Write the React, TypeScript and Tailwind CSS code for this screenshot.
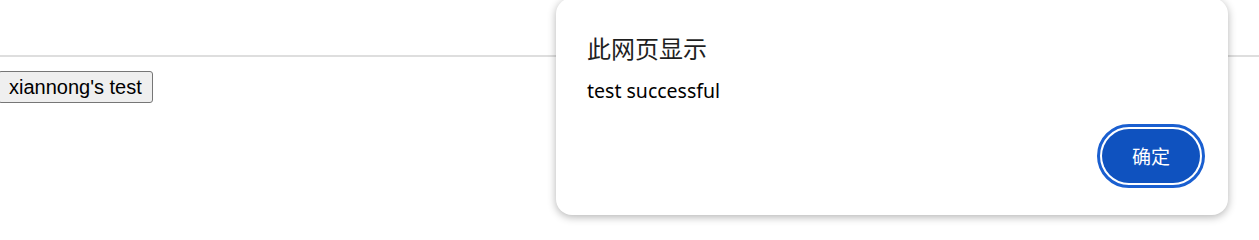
export default function App() {
  return (
    <div className="relative h-[234px] w-[1259px] overflow-hidden bg-white font-['Liberation_Sans',Arial,sans-serif]">
      {/* page content */}
      <div className="pt-[55px]">
        <div className="h-[2px] w-full bg-[#dedede]" />
        <button className="-ml-[2px] mt-[14px] h-[32px] rounded-[3px] border border-[#767676] bg-[#efefef] px-[10px] text-[20px] leading-none text-black">
          xiannong's test
        </button>
      </div>

      {/* alert dialog */}
      <div className="absolute left-[556px] top-[-2px] flex h-[217px] w-[672px] flex-col rounded-[16px] bg-white px-[31px] pt-[35px] shadow-[0_2px_8px_rgba(0,0,0,0.3)]">
        <div className="font-['Noto_Sans_CJK_SC',sans-serif] text-[24px] leading-[29px] text-[#1f1f1f]">此网页显示</div>
        <div className="mt-[17px] font-['Noto_Sans','Noto_Sans_CJK_SC',sans-serif] text-[19.5px] leading-[24px] text-black">test successful</div>
        <div className="mt-auto mb-[27px] flex justify-end">
          <div className="-mr-[8px] rounded-full border-[3px] border-[#1a5fd0] p-[2px]">
            <button className="flex h-[54px] w-[98px] items-center justify-center rounded-full bg-[#0f52bf] font-['Noto_Sans_CJK_SC',sans-serif] text-[19px] text-white">
              确定
            </button>
          </div>
        </div>
      </div>
    </div>
  );
}
